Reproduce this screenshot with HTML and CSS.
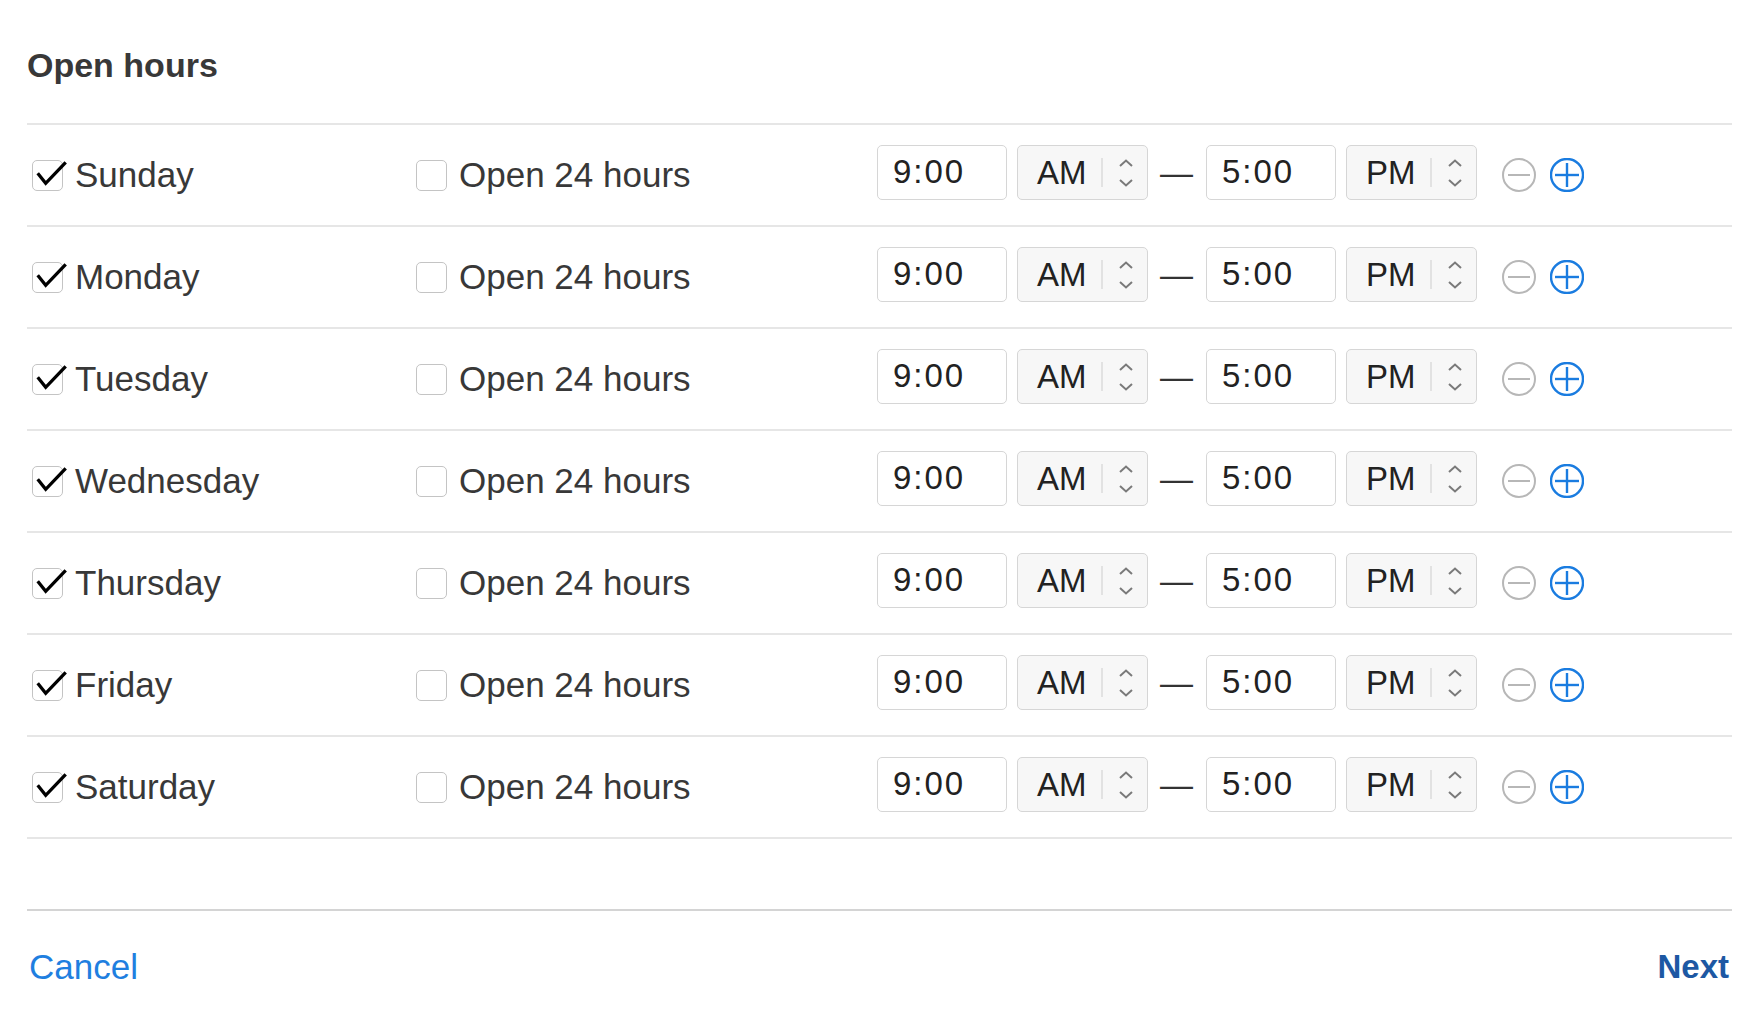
FILE: index.html
```html
<!DOCTYPE html>
<html>
<head>
<meta charset="utf-8">
<link rel="stylesheet" href="styles.css">
</head>
<body>
<div class="panel">
  <h1 class="title">Open hours</h1>
  <div class="list">
    <div class="row">
      <div class="day"><span class="cb"><svg class="tick" viewBox="0 0 31 31"><polyline points="5.7,14.3 13.7,24.3 33.7,3.3"/></svg></span><span class="label">Sunday</span></div>
      <div class="allday"><span class="cb"></span><span class="label">Open 24 hours</span></div>
      <div class="times">
        <span class="tbox">9:00</span>
        <span class="ampm"><span class="ap">AM</span><span class="sep"></span><svg class="chev" viewBox="0 0 14 28"><polyline points="1,7 7,1.5 13,7"/><polyline points="1,21 7,26.5 13,21"/></svg></span>
        <span class="dash">—</span>
        <span class="tbox">5:00</span>
        <span class="ampm"><span class="ap">PM</span><span class="sep"></span><svg class="chev" viewBox="0 0 14 28"><polyline points="1,7 7,1.5 13,7"/><polyline points="1,21 7,26.5 13,21"/></svg></span>
        <svg class="btn minus" viewBox="0 0 34 34"><circle cx="17" cy="17" r="16"/><line x1="6" y1="17" x2="28" y2="17"/></svg>
        <svg class="btn plus" viewBox="0 0 34 34"><circle cx="17" cy="17" r="16"/><line x1="5" y1="17" x2="29" y2="17"/><line x1="17" y1="5" x2="17" y2="29"/></svg>
      </div>
    </div>
    <div class="row">
      <div class="day"><span class="cb"><svg class="tick" viewBox="0 0 31 31"><polyline points="5.7,14.3 13.7,24.3 33.7,3.3"/></svg></span><span class="label">Monday</span></div>
      <div class="allday"><span class="cb"></span><span class="label">Open 24 hours</span></div>
      <div class="times">
        <span class="tbox">9:00</span>
        <span class="ampm"><span class="ap">AM</span><span class="sep"></span><svg class="chev" viewBox="0 0 14 28"><polyline points="1,7 7,1.5 13,7"/><polyline points="1,21 7,26.5 13,21"/></svg></span>
        <span class="dash">—</span>
        <span class="tbox">5:00</span>
        <span class="ampm"><span class="ap">PM</span><span class="sep"></span><svg class="chev" viewBox="0 0 14 28"><polyline points="1,7 7,1.5 13,7"/><polyline points="1,21 7,26.5 13,21"/></svg></span>
        <svg class="btn minus" viewBox="0 0 34 34"><circle cx="17" cy="17" r="16"/><line x1="6" y1="17" x2="28" y2="17"/></svg>
        <svg class="btn plus" viewBox="0 0 34 34"><circle cx="17" cy="17" r="16"/><line x1="5" y1="17" x2="29" y2="17"/><line x1="17" y1="5" x2="17" y2="29"/></svg>
      </div>
    </div>
    <div class="row">
      <div class="day"><span class="cb"><svg class="tick" viewBox="0 0 31 31"><polyline points="5.7,14.3 13.7,24.3 33.7,3.3"/></svg></span><span class="label">Tuesday</span></div>
      <div class="allday"><span class="cb"></span><span class="label">Open 24 hours</span></div>
      <div class="times">
        <span class="tbox">9:00</span>
        <span class="ampm"><span class="ap">AM</span><span class="sep"></span><svg class="chev" viewBox="0 0 14 28"><polyline points="1,7 7,1.5 13,7"/><polyline points="1,21 7,26.5 13,21"/></svg></span>
        <span class="dash">—</span>
        <span class="tbox">5:00</span>
        <span class="ampm"><span class="ap">PM</span><span class="sep"></span><svg class="chev" viewBox="0 0 14 28"><polyline points="1,7 7,1.5 13,7"/><polyline points="1,21 7,26.5 13,21"/></svg></span>
        <svg class="btn minus" viewBox="0 0 34 34"><circle cx="17" cy="17" r="16"/><line x1="6" y1="17" x2="28" y2="17"/></svg>
        <svg class="btn plus" viewBox="0 0 34 34"><circle cx="17" cy="17" r="16"/><line x1="5" y1="17" x2="29" y2="17"/><line x1="17" y1="5" x2="17" y2="29"/></svg>
      </div>
    </div>
    <div class="row">
      <div class="day"><span class="cb"><svg class="tick" viewBox="0 0 31 31"><polyline points="5.7,14.3 13.7,24.3 33.7,3.3"/></svg></span><span class="label">Wednesday</span></div>
      <div class="allday"><span class="cb"></span><span class="label">Open 24 hours</span></div>
      <div class="times">
        <span class="tbox">9:00</span>
        <span class="ampm"><span class="ap">AM</span><span class="sep"></span><svg class="chev" viewBox="0 0 14 28"><polyline points="1,7 7,1.5 13,7"/><polyline points="1,21 7,26.5 13,21"/></svg></span>
        <span class="dash">—</span>
        <span class="tbox">5:00</span>
        <span class="ampm"><span class="ap">PM</span><span class="sep"></span><svg class="chev" viewBox="0 0 14 28"><polyline points="1,7 7,1.5 13,7"/><polyline points="1,21 7,26.5 13,21"/></svg></span>
        <svg class="btn minus" viewBox="0 0 34 34"><circle cx="17" cy="17" r="16"/><line x1="6" y1="17" x2="28" y2="17"/></svg>
        <svg class="btn plus" viewBox="0 0 34 34"><circle cx="17" cy="17" r="16"/><line x1="5" y1="17" x2="29" y2="17"/><line x1="17" y1="5" x2="17" y2="29"/></svg>
      </div>
    </div>
    <div class="row">
      <div class="day"><span class="cb"><svg class="tick" viewBox="0 0 31 31"><polyline points="5.7,14.3 13.7,24.3 33.7,3.3"/></svg></span><span class="label">Thursday</span></div>
      <div class="allday"><span class="cb"></span><span class="label">Open 24 hours</span></div>
      <div class="times">
        <span class="tbox">9:00</span>
        <span class="ampm"><span class="ap">AM</span><span class="sep"></span><svg class="chev" viewBox="0 0 14 28"><polyline points="1,7 7,1.5 13,7"/><polyline points="1,21 7,26.5 13,21"/></svg></span>
        <span class="dash">—</span>
        <span class="tbox">5:00</span>
        <span class="ampm"><span class="ap">PM</span><span class="sep"></span><svg class="chev" viewBox="0 0 14 28"><polyline points="1,7 7,1.5 13,7"/><polyline points="1,21 7,26.5 13,21"/></svg></span>
        <svg class="btn minus" viewBox="0 0 34 34"><circle cx="17" cy="17" r="16"/><line x1="6" y1="17" x2="28" y2="17"/></svg>
        <svg class="btn plus" viewBox="0 0 34 34"><circle cx="17" cy="17" r="16"/><line x1="5" y1="17" x2="29" y2="17"/><line x1="17" y1="5" x2="17" y2="29"/></svg>
      </div>
    </div>
    <div class="row">
      <div class="day"><span class="cb"><svg class="tick" viewBox="0 0 31 31"><polyline points="5.7,14.3 13.7,24.3 33.7,3.3"/></svg></span><span class="label">Friday</span></div>
      <div class="allday"><span class="cb"></span><span class="label">Open 24 hours</span></div>
      <div class="times">
        <span class="tbox">9:00</span>
        <span class="ampm"><span class="ap">AM</span><span class="sep"></span><svg class="chev" viewBox="0 0 14 28"><polyline points="1,7 7,1.5 13,7"/><polyline points="1,21 7,26.5 13,21"/></svg></span>
        <span class="dash">—</span>
        <span class="tbox">5:00</span>
        <span class="ampm"><span class="ap">PM</span><span class="sep"></span><svg class="chev" viewBox="0 0 14 28"><polyline points="1,7 7,1.5 13,7"/><polyline points="1,21 7,26.5 13,21"/></svg></span>
        <svg class="btn minus" viewBox="0 0 34 34"><circle cx="17" cy="17" r="16"/><line x1="6" y1="17" x2="28" y2="17"/></svg>
        <svg class="btn plus" viewBox="0 0 34 34"><circle cx="17" cy="17" r="16"/><line x1="5" y1="17" x2="29" y2="17"/><line x1="17" y1="5" x2="17" y2="29"/></svg>
      </div>
    </div>
    <div class="row">
      <div class="day"><span class="cb"><svg class="tick" viewBox="0 0 31 31"><polyline points="5.7,14.3 13.7,24.3 33.7,3.3"/></svg></span><span class="label">Saturday</span></div>
      <div class="allday"><span class="cb"></span><span class="label">Open 24 hours</span></div>
      <div class="times">
        <span class="tbox">9:00</span>
        <span class="ampm"><span class="ap">AM</span><span class="sep"></span><svg class="chev" viewBox="0 0 14 28"><polyline points="1,7 7,1.5 13,7"/><polyline points="1,21 7,26.5 13,21"/></svg></span>
        <span class="dash">—</span>
        <span class="tbox">5:00</span>
        <span class="ampm"><span class="ap">PM</span><span class="sep"></span><svg class="chev" viewBox="0 0 14 28"><polyline points="1,7 7,1.5 13,7"/><polyline points="1,21 7,26.5 13,21"/></svg></span>
        <svg class="btn minus" viewBox="0 0 34 34"><circle cx="17" cy="17" r="16"/><line x1="6" y1="17" x2="28" y2="17"/></svg>
        <svg class="btn plus" viewBox="0 0 34 34"><circle cx="17" cy="17" r="16"/><line x1="5" y1="17" x2="29" y2="17"/><line x1="17" y1="5" x2="17" y2="29"/></svg>
      </div>
    </div>
  </div>
  <div class="footer">
    <span class="cancel">Cancel</span>
    <span class="next">Next</span>
  </div>
</div>
</body>
</html>
```
FILE: styles.css
```css
html, body {
  margin: 0;
  padding: 0;
  background: #ffffff;
}
body {
  font-family: "Liberation Sans", Arial, sans-serif;
  color: #333333;
}
.panel {
  padding: 45px 12px 0 27px;
}
.title {
  margin: 0 0 38px 0;
  font-size: 34px;
  line-height: 40px;
  font-weight: bold;
  color: #383838;
}
.list {
  border-top: 2px solid #e6e6e6;
  margin-bottom: 70px;
}
.row {
  display: flex;
  align-items: center;
  height: 100px;
  border-bottom: 2px solid #e6e6e6;
}
.day {
  display: flex;
  align-items: center;
  width: 389px;
  padding-left: 5px;
  box-sizing: border-box;
}
.allday {
  display: flex;
  align-items: center;
  width: 461px;
}
.cb {
  position: relative;
  display: inline-block;
  width: 31px;
  height: 31px;
  box-sizing: border-box;
  border: 1.5px solid #c4c4c4;
  border-radius: 5px;
  background: #fff;
  flex: none;
}
.tick {
  position: absolute;
  left: -1.5px;
  top: -1.5px;
  width: 31px;
  height: 31px;
  overflow: visible;
}
.tick polyline {
  fill: none;
  stroke: #000;
  stroke-width: 3.3;
  stroke-linejoin: miter;
}
.label {
  margin-left: 12px;
  font-size: 35px;
  line-height: 40px;
  color: #383838;
}
.times {
  display: flex;
  align-items: center;
}
.tbox, .ampm {
  height: 55px;
  box-sizing: border-box;
  border: 1.5px solid #d6d6d6;
  border-radius: 5px;
  margin-bottom: 5px;
  font-size: 33px;
  line-height: 52px;
  color: #222;
}
.tbox {
  width: 130px;
  padding-left: 15px;
  letter-spacing: 2px;
  background: #fff;
  margin-right: 10px;
}
.ampm {
  width: 131px;
  display: flex;
  align-items: center;
  padding-left: 19px;
  background: #f7f7f7;
}
.ap {
  width: 50px;
}
.sep {
  width: 1.5px;
  height: 29px;
  background: #e2e2e2;
  margin-left: 14px;
  margin-right: 16px;
}
.chev {
  width: 14px;
  height: 28px;
  margin-top: 1px;
}
.chev polyline {
  fill: none;
  stroke: #7a7a7a;
  stroke-width: 2;
}
.dash {
  margin: 0 13px 5px 12px;
  font-size: 33px;
  line-height: 40px;
  color: #333;
}
.btn {
  width: 34px;
  height: 34px;
  flex: none;
}
.btn circle, .btn line {
  fill: none;
}
.minus {
  margin-left: 25px;
}
.minus circle, .minus line {
  stroke: #b7b7b7;
  stroke-width: 2;
}
.plus {
  margin-left: 14px;
}
.plus circle, .plus line {
  stroke: #1a7ce0;
  stroke-width: 2.4;
}
.footer {
  display: flex;
  justify-content: space-between;
  align-items: center;
  border-top: 2px solid #d4d4d4;
  padding: 36px 3px 0 2px;
}
.cancel {
  font-size: 35px;
  line-height: 40px;
  color: #1f7fe0;
}
.next {
  font-size: 33px;
  line-height: 40px;
  font-weight: bold;
  color: #1d58a3;
}
```
